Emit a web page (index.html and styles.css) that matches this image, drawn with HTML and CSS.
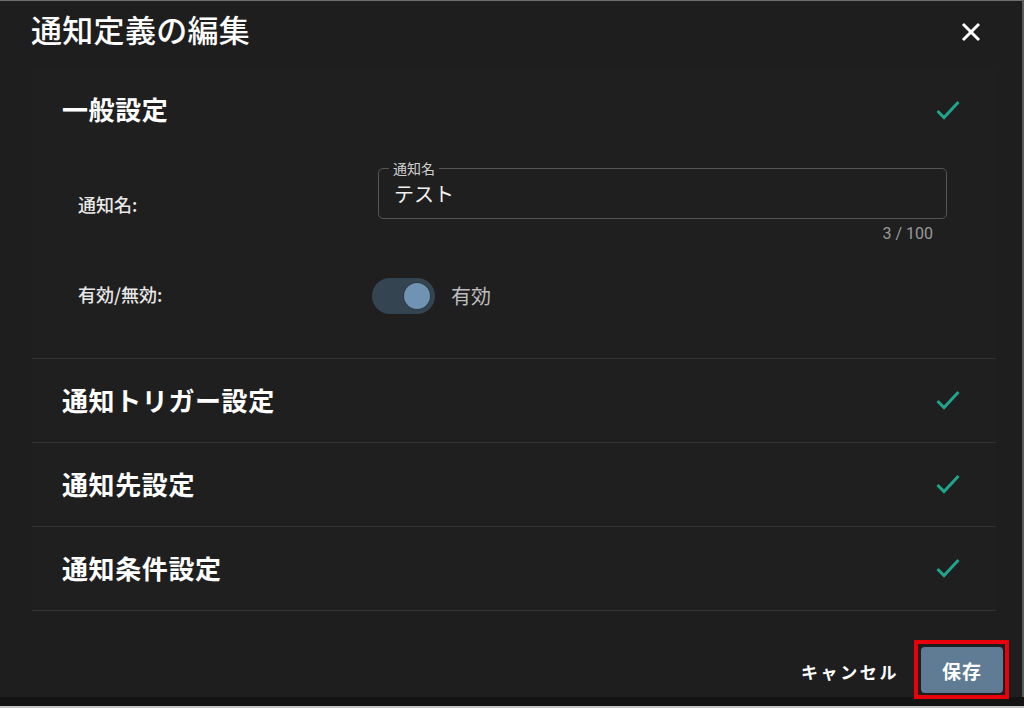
FILE: index.html
```html
<!DOCTYPE html>
<html lang="ja">
<head>
<meta charset="utf-8">
<title>通知定義の編集</title>
<link rel="stylesheet" href="styles.css">
</head>
<body>
<div class="screen">
  <div class="dialog">
    <div class="titlebar">
      <h1 class="title">通知定義の編集</h1>
      <button class="close" aria-label="閉じる">
        <svg width="24" height="24" viewBox="0 0 24 24"><path d="M4 4 L20 20 M20 4 L4 20" stroke="#fff" stroke-width="3" fill="none"/></svg>
      </button>
    </div>

    <div class="panels">
      <div class="panel">
        <div class="panel-header">
          <span class="panel-title">一般設定</span>
          <svg class="check" width="24" height="20" viewBox="0 0 24 20"><polyline points="1.5,11 8,17.5 22.5,2" stroke="#1fa58c" stroke-width="3" fill="none"/></svg>
        </div>
        <div class="panel-body">
          <div class="row row-name">
            <div class="row-label">通知名:</div>
            <div class="row-control">
              <div class="textfield">
                <span class="tf-label">通知名</span>
                <span class="tf-value">テスト</span>
              </div>
              <div class="counter">3 / 100</div>
            </div>
          </div>
          <div class="row row-switch">
            <div class="row-label">有効/無効:</div>
            <div class="row-control switch-wrap">
              <div class="switch"><span class="thumb"></span></div>
              <span class="switch-label">有効</span>
            </div>
          </div>
        </div>
      </div>

      <div class="panel">
        <div class="panel-header">
          <span class="panel-title">通知トリガー設定</span>
          <svg class="check" width="24" height="20" viewBox="0 0 24 20"><polyline points="1.5,11 8,17.5 22.5,2" stroke="#1fa58c" stroke-width="3" fill="none"/></svg>
        </div>
      </div>

      <div class="panel">
        <div class="panel-header">
          <span class="panel-title">通知先設定</span>
          <svg class="check" width="24" height="20" viewBox="0 0 24 20"><polyline points="1.5,11 8,17.5 22.5,2" stroke="#1fa58c" stroke-width="3" fill="none"/></svg>
        </div>
      </div>

      <div class="panel">
        <div class="panel-header">
          <span class="panel-title">通知条件設定</span>
          <svg class="check" width="24" height="20" viewBox="0 0 24 20"><polyline points="1.5,11 8,17.5 22.5,2" stroke="#1fa58c" stroke-width="3" fill="none"/></svg>
        </div>
      </div>
    </div>

    <div class="footer">
      <button class="btn-cancel">キャンセル</button>
      <div class="save-wrap">
        <button class="btn-save">保存</button>
        <span class="highlight"></span>
      </div>
    </div>
  </div>
  <div class="bottom-band"></div>
</div>
</body>
</html>
```
FILE: styles.css
```css
html, body {
  margin: 0;
  padding: 0;
  background: #121212;
}

.screen {
  width: 1024px;
  height: 708px;
  box-sizing: border-box;
  display: flex;
  flex-direction: column;
  border-bottom: 2px solid #c4c4c4;
  font-family: "Noto Sans CJK JP", "Noto Sans", sans-serif;
  color: #fff;
  overflow: hidden;
}

.dialog {
  height: 697px;
  box-sizing: border-box;
  background: #1e1e1e;
  border-top: 1px solid #6e6e6e;
  border-right: 2px solid #5a5a5a;
  display: flex;
  flex-direction: column;
}

.bottom-band {
  flex: 1;
  background: #131313;
}

.titlebar {
  height: 67px;
  box-sizing: border-box;
  padding: 10px 39px 0 31px;
  display: flex;
  align-items: flex-start;
  justify-content: space-between;
}

.title {
  margin: 0;
  font-size: 31px;
  font-weight: 500;
  line-height: 36px;
  letter-spacing: 0.3px;
}

.close {
  margin-top: 9px;
  width: 24px;
  height: 24px;
  padding: 0;
  border: 0;
  background: none;
  display: flex;
}

.panels {
  margin: 0 26px 0 32px;
  display: flex;
  flex-direction: column;
}

.panel {
  background: #1f1f1f;
  border-bottom: 1px solid #333;
}

.panel:first-child .panel-header {
  height: 84px;
}

.panel-header {
  height: 83px;
  box-sizing: border-box;
  display: flex;
  align-items: center;
  justify-content: space-between;
  padding: 0 36px 3px 30px;
}

.panel-header .check {
  margin-top: 2px;
}

.panel-title {
  font-size: 26px;
  font-weight: 700;
  letter-spacing: 0.6px;
}

.panel-body {
  padding: 16px 49px 44px 46px;
  display: flex;
  flex-direction: column;
  gap: 34px;
}

.row {
  display: flex;
  align-items: center;
}

.row-label {
  width: 294px;
  font-size: 18px;
  font-weight: 500;
  color: #e8e8e8;
  padding-bottom: 4px;
}

.row-control {
  flex: 1;
}

.row-name .row-control {
  margin-left: 6px;
}

.textfield {
  position: relative;
  height: 51px;
  box-sizing: border-box;
  border: 1px solid #555;
  border-radius: 5px;
  display: flex;
  align-items: center;
  padding: 0 15px;
}

.tf-label {
  position: absolute;
  left: 10px;
  top: -10px;
  padding: 0 4px;
  background: #1f1f1f;
  font-size: 14px;
  line-height: 18px;
  color: #cfcfcf;
}

.tf-value {
  font-size: 20px;
  color: #f2f2f2;
  margin-top: -1px;
}

.counter {
  text-align: right;
  font-family: Roboto, "Noto Sans", sans-serif;
  font-size: 16px;
  color: #9a9a9a;
  padding: 5px 14px 0 0;
  line-height: 20px;
}

.switch-wrap {
  display: flex;
  align-items: center;
  gap: 16px;
}

.switch {
  width: 63px;
  height: 36px;
  border-radius: 18px;
  background: #354451;
  display: flex;
  align-items: center;
  justify-content: flex-end;
  padding-right: 5px;
  box-sizing: border-box;
}

.thumb {
  width: 26px;
  height: 26px;
  border-radius: 50%;
  background: #7093b3;
  box-shadow: 0 0 0 1px #2c3a45;
}

.switch-label {
  font-size: 20px;
  color: #bdbdbd;
  padding-bottom: 2px;
}

.footer {
  flex: 1;
  display: flex;
  align-items: center;
  justify-content: flex-end;
  padding: 32px 19px 0 0;
  gap: 22px;
}

.btn-cancel {
  border: 0;
  background: none;
  color: #fff;
  font-family: inherit;
  font-size: 17px;
  font-weight: 700;
  letter-spacing: 2.6px;
  padding: 0;
  margin-top: 2px;
}

.save-wrap {
  position: relative;
  display: flex;
}

.btn-save {
  width: 82px;
  height: 46px;
  border: 0;
  border-radius: 4px;
  background: #5f7c94;
  color: #fff;
  font-family: inherit;
  font-size: 19px;
  font-weight: 700;
  letter-spacing: 1px;
}

.highlight {
  position: absolute;
  left: -7px;
  top: -7px;
  right: -6px;
  bottom: -6px;
  border: 4px solid #e8000b;
}
```
